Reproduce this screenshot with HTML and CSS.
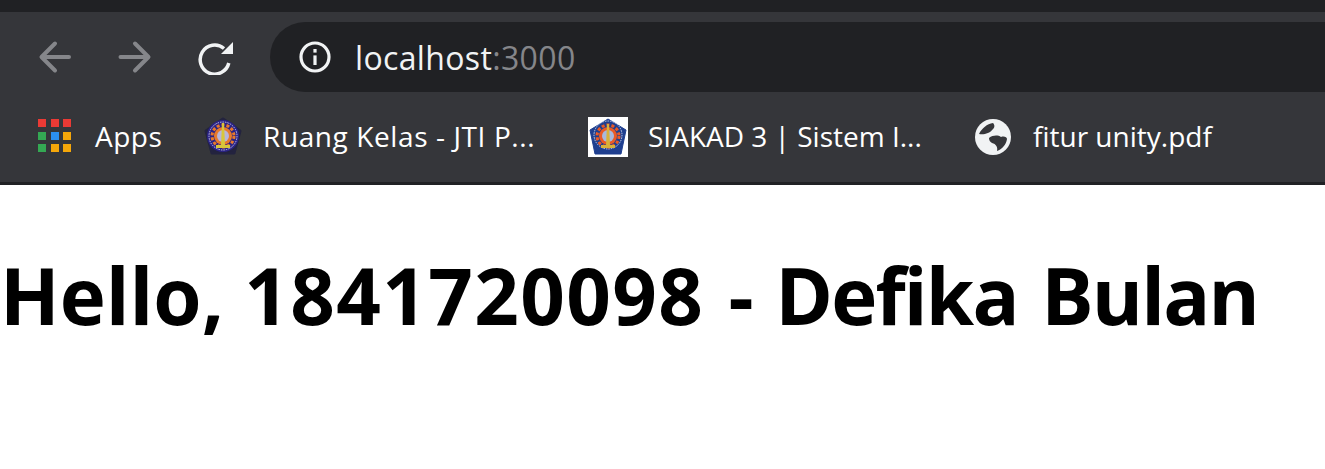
FILE: index.html
```html
<!DOCTYPE html>
<html lang="en">
<head>
    <meta charset="UTF-8">
    <title>localhost:3000</title>
    <link rel="stylesheet" href="styles.css">
</head>
<body>
    <div class="tabstrip"></div>
    <div class="toolbar">
        <div class="navrow">
            <svg class="nav-icon" viewBox="0 0 36 36"><path d="M32 18H5M18 4.500 4.500 18 18 31.500" fill="none" stroke="#85868a" stroke-width="4" stroke-linecap="round" stroke-linejoin="round"/></svg>
            <svg class="nav-icon" viewBox="0 0 36 36"><path d="M3.500 18H31M18 4.500 31.500 18 18 31.500" fill="none" stroke="#85868a" stroke-width="4" stroke-linecap="round" stroke-linejoin="round"/></svg>
            <svg class="nav-icon" viewBox="0 0 36 36"><path d="M27 9.500A14.500 14.500 0 1 0 31.800 24" fill="none" stroke="#f1f3f4" stroke-width="3.500"/><path d="M36 3V15H24Z" fill="#f1f3f4"/></svg>
            <div class="omnibox">
                <svg class="info-icon" viewBox="0 0 32 32"><circle cx="16" cy="16" r="14" fill="none" stroke="#f1f3f4" stroke-width="3.200"/><rect x="14.400" y="14.400" width="3.200" height="9.600" fill="#f1f3f4"/><rect x="14.400" y="8" width="3.200" height="3.600" fill="#f1f3f4"/></svg>
                <span class="url">localhost<span class="port">:3000</span></span>
            </div>
        </div>
        <div class="bookmarks">
            <div class="bookmark apps">
                <svg class="fav" viewBox="0 0 34 34">
                    <rect x="0" y="0" width="8" height="8" fill="#ea3a35"/><rect x="13" y="0" width="8" height="8" fill="#ea3a35"/><rect x="25" y="0" width="8" height="8" fill="#ea3a35"/>
                    <rect x="0" y="13" width="8" height="8" fill="#34a853"/><rect x="13" y="13" width="8" height="8" fill="#2b8ff0"/><rect x="25" y="13" width="8" height="8" fill="#f5a70a"/>
                    <rect x="0" y="25" width="8" height="8" fill="#34a853"/><rect x="13" y="25" width="8" height="8" fill="#f5a70a"/><rect x="25" y="25" width="8" height="8" fill="#f5a70a"/>
                </svg>
                <span>Apps</span>
            </div>
            <div class="bookmark ruang">
                <svg class="fav crest" viewBox="0 0 40 40">
                    <path d="M20 2 37 14 31 36H9L3 14Z" fill="#23233f" stroke="#23233f" stroke-width="3" stroke-linejoin="round"/>
                    <circle cx="20" cy="19" r="16" fill="#2a2385"/>
                    <circle cx="20" cy="19" r="14" fill="none" stroke="#c9c6e6" stroke-width="1" stroke-dasharray="1.500 1"/>
                    <circle cx="20" cy="19" r="11" fill="none" stroke="#e8792b" stroke-width="3" stroke-dasharray="3 2"/>
                    <circle cx="20" cy="19" r="9" fill="#e8792b"/>
                    <circle cx="20" cy="19" r="6" fill="#b9b5d8"/>
                    <path d="M19 6h2l1 22h5v3H13v-3h5Z" fill="#d8c63a"/>
                </svg>
                <span>Ruang Kelas - JTI P...</span>
            </div>
            <div class="bookmark siakad">
                <svg class="fav crest" viewBox="0 0 40 40">
                    <rect width="40" height="40" fill="#fff"/>
                    <path d="M20 2 38 13 33 37H7L2 13Z" fill="#1f3f8f" stroke="#1f3f8f" stroke-linejoin="round"/>
                    <circle cx="20" cy="18" r="14" fill="none" stroke="#c9d2ea" stroke-width="1" stroke-dasharray="1.500 1"/>
                    <circle cx="20" cy="19" r="11" fill="none" stroke="#ea5a25" stroke-width="3" stroke-dasharray="3 2"/>
                    <circle cx="20" cy="19" r="9" fill="#ea5a25"/>
                    <circle cx="20" cy="19" r="6" fill="#a9b8dc"/>
                    <path d="M19 7h2l1 21h5v3H13v-3h5Z" fill="#d8b23a"/>
                </svg>
                <span>SIAKAD 3 | Sistem I...</span>
            </div>
            <div class="bookmark fitur">
                <svg class="fav globe" viewBox="0 0 36 36">
                    <circle cx="18" cy="18" r="18" fill="#f1f3f4"/>
                    <path d="M4 15C7 9 12 5 18 4 20 6 20 9 17 11 15 14 9 16 4 15ZM14 19C18 16 23 16 26 18 29 17 32 18 32 20 31 26 27 30 22 32 23 28 21 25 17 24 15 23 14 21 14 19Z" fill="#35363a"/>
                </svg>
                <span>fitur unity.pdf</span>
            </div>
        </div>
    </div>
    <h1 class="greeting">Hello, <span class="nim">1841720098</span> <span class="name">- Defika Bulan</span></h1>
</body>
</html>
```

FILE: styles.css
```css
body {
    margin: 0;
    background-color: #fff;
    font-family: "Open Sans", "Noto Sans", sans-serif;
    overflow: hidden;
}
.tabstrip {
    height: 12px;
    background-color: #202124;
}
.toolbar {
    height: 170px;
    background-color: #35363a;
    border-bottom: 3px solid #202124;
}
.navrow {
    display: flex;
    align-items: center;
    height: 70px;
    padding: 10px 0 0 37px;
    gap: 44px;
}
.nav-icon {
    width: 36px;
    height: 36px;
    flex: none;
}
.omnibox {
    flex: 1;
    height: 70px;
    margin-left: -7px;
    margin-right: -40px;
    border-radius: 35px;
    background-color: #202124;
    display: flex;
    align-items: center;
    padding-left: 29px;
}
.info-icon {
    width: 32px;
    height: 32px;
    margin-right: 24px;
}
.url {
    color: #f1f3f4;
    font-size: 32px;
    letter-spacing: 0.35px;
}
.port {
    color: #85868a;
}
.bookmarks {
    display: flex;
    align-items: center;
    height: 40px;
    margin-top: 15px;
    padding-top: 10px;
    color: #fff;
    font-size: 28px;
}
.bookmark {
    display: flex;
    align-items: center;
    white-space: nowrap;
}
.bookmark span {
    padding-bottom: 2px;
}
.fav {
    width: 40px;
    height: 40px;
    flex: none;
    margin-right: 20px;
}
.crest {
    filter: blur(0.4px);
}
.apps {
    margin-left: 38px;
    width: 165px;
}
.apps span {
    letter-spacing: 0.5px;
}
.apps .fav {
    width: 34px;
    height: 34px;
    margin-right: 23px;
    margin-bottom: 2px;
}
.ruang {
    width: 385px;
}
.ruang span {
    letter-spacing: 0.6px;
}
.siakad {
    width: 387px;
}
.globe {
    width: 36px;
    height: 36px;
    margin-right: 22px;
}
.greeting {
    margin: 0;
    padding: 65px 0 0 0;
    font-size: 78px;
    line-height: 90px;
    font-weight: 700;
    color: #000;
    white-space: nowrap;
}
.nim {
    letter-spacing: 1.4px;
    margin-right: 4px;
}
.name {
    letter-spacing: -1.8px;
    word-spacing: 5px;
}
```
